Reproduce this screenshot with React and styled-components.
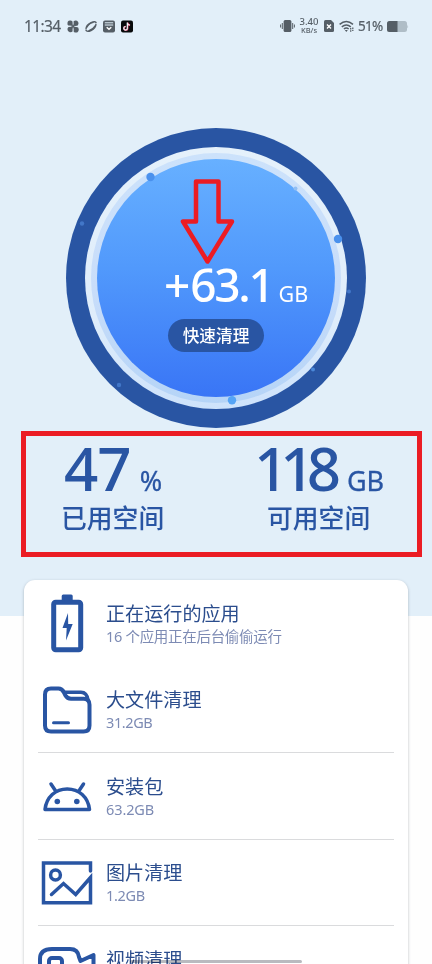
import React from 'react';
import styled, { createGlobalStyle } from 'styled-components';

const NAVY = '#2955a3';
const RED = '#eb1c24';

const GlobalStyle = createGlobalStyle`
  * { box-sizing: border-box; }
  body {
    margin: 0;
    background: #fdfefe;
    font-family: "Noto Sans", "Noto Sans CJK SC", sans-serif;
  }
`;

const Page = styled.main`
  position: relative;
  width: 432px;
  height: 964px;
  overflow: hidden;
  background: #fefefe;
`;

const Hero = styled.section`
  height: 616px;
  display: flex;
  flex-direction: column;
  align-items: center;
  background: #e2eff9;
`;

const StatusBar = styled.header`
  width: 100%;
  height: 52px;
  padding: 0 23px 0 24px;
  display: flex;
  align-items: center;
  justify-content: space-between;
  color: #555e66;
`;

const StatusGroup = styled.div`
  display: flex;
  align-items: center;
  svg { display: block; }
`;

const Clock = styled.span`
  width: 43px;
  font-size: 15.5px;
  line-height: 22px;
  padding-bottom: 1px;
  letter-spacing: -0.65px;
  -webkit-text-stroke: 0.2px currentColor;
`;

const AppIcons = styled.div`
  display: flex;
  gap: 6px;
`;

const NetSpeed = styled.div`
  width: 20px;
  margin: 0 5px 0 4px;
  display: flex;
  flex-direction: column;
  align-items: center;
  font-size: 9.5px;
  line-height: 8px;
  font-weight: 500;
  small { font-size: 7.5px; line-height: 8px; }
`;

const Percent = styled.span`
  width: 26px;
  margin: 0 3px 0 4px;
  font-size: 13.5px;
  line-height: 18px;
  letter-spacing: -0.7px;
  -webkit-text-stroke: 0.2px currentColor;
`;

const Gauge = styled.div`
  position: relative;
  flex: none;
  width: 300px;
  height: 300px;
  margin-top: 76px;
  padding: 19px;
  border-radius: 50%;
  background: ${NAVY};
`;

const Halo = styled.div`
  height: 100%;
  padding: 6px;
  border-radius: 50%;
  background: linear-gradient(#e5f1fb, #dfedfb 65%, #cde2fb);
`;

const InnerHalo = styled.div`
  height: 100%;
  padding: 6px;
  border-radius: 50%;
  background: linear-gradient(#cce2fb, #c8ddfa 55%, #b5d4f7);
`;

const Disc = styled.div`
  height: 100%;
  padding-top: 97px;
  display: flex;
  flex-direction: column;
  align-items: center;
  border-radius: 50%;
  background: linear-gradient(#67b0ff, #5199fc 46%, #3975f6);
  color: #fff;
`;

const Amount = styled.div`
  width: 100%;
  height: 52px;
  padding-left: 67px;
  display: flex;
  align-items: baseline;
  font-size: 46px;
  line-height: 56px;
  font-weight: 500;
  letter-spacing: -2.3px;
  white-space: nowrap;
`;

const Plus = styled.span`
  letter-spacing: 0;
`;

const Unit = styled.span`
  margin-left: 6px;
  font-size: 21.5px;
  font-weight: 400;
  letter-spacing: 0;
`;

const CleanButton = styled.button`
  width: 96px;
  height: 33px;
  margin-top: 11px;
  padding: 0;
  border: 0;
  border-radius: 17px;
  background: ${NAVY};
  color: #fff;
  font: 500 16.7px/33px "Noto Sans CJK SC", sans-serif;
`;

const Overlay = styled.svg`
  position: absolute;
  inset: 0;
`;

const Stats = styled.div`
  width: 401px;
  height: 126px;
  margin: 3px 0 0 11px;
  border: 5px solid ${RED};
  display: flex;
  color: ${NAVY};
`;

const Stat = styled.div`
  width: ${(p) => p.$width}px;
  padding-left: ${(p) => p.$indent}px;
`;

const StatValue = styled.div`
  height: 68px;
  margin-left: ${(p) => p.$shift}px;
  display: flex;
  align-items: baseline;
  font-size: 60px;
  line-height: 64px;
  font-weight: 500;
  letter-spacing: ${(p) => p.$tracking}px;
  white-space: nowrap;
`;

const StatUnit = styled.span`
  margin-left: ${(p) => p.$gap}px;
  font-size: 27px;
  font-weight: 400;
  letter-spacing: 0;
  -webkit-text-stroke: 0.3px currentColor;
`;

const StatLabel = styled.div`
  font: 500 25.8px/26px "Noto Sans CJK SC", sans-serif;
`;

const Card = styled.section`
  position: relative;
  width: 384px;
  height: 420px;
  margin: -36px auto 0;
  padding: 0 14px;
  border-radius: 11px;
  background: #fff;
  box-shadow: 0 1px 3px rgba(60, 70, 80, 0.35);
`;

const Row = styled.div`
  height: 86.5px;
  display: flex;
  border-bottom: 1px solid ${(p) => (p.$divided ? '#dadbdd' : 'transparent')};
`;

const RowIcon = styled.svg`
  flex: none;
  display: block;
  width: 68px;
  height: 85px;
  fill: none;
  stroke: ${NAVY};
  stroke-width: 4;
  stroke-linejoin: round;
  stroke-linecap: round;
`;

const RowText = styled.div`
  padding-top: 19.5px;
  white-space: nowrap;
`;

const RowTitle = styled.div`
  color: #2b4d8d;
  font: 400 19.1px/26px "Noto Sans CJK SC", sans-serif;
`;

const RowNote = styled.div`
  color: #7d8bb4;
  font-size: 14.5px;
  line-height: 20px;
  letter-spacing: ${(p) => p.$tracking || 0}px;
`;

const HomeBar = styled.div`
  position: absolute;
  left: 130px;
  top: 960px;
  width: 172px;
  height: 3px;
  border-radius: 2px;
  background: #b9babf;
  mix-blend-mode: multiply;
`;

const AppBadges = () => (
  <AppIcons>
    <svg width="12" height="13" viewBox="0 0 12 13" fill="currentColor">
      <path d="M.5 4.5Q0 .5 3 .5q3-.2 2.800 2.800V6L3 5.800Q.7 5.800.5 4.500z" />
      <path d="M6.400 1.500Q8 .2 10 .8q1.700.8 1.500 3Q11.300 6 9 6H6.400z" />
      <path d="M5.700 6.700H3Q.5 6.700.4 9q0 2.600 2.400 3.300 2 .2 2.900-1z" />
      <path d="M6.400 6.700 9 7q2.800-.2 2.800 2.400Q11.600 12.500 9 12.500q-2.700 0-2.600-2.600z" />
      <rect x="4" y="4.300" width="4.200" height="4.200" />
      <path d="M1.500 6.200h3.700M6.100 1.500v3.700M7 6.400h3.700M6.200 7.500v3.800" stroke="#e2eff9" strokeWidth=".6" />
    </svg>
    <svg width="12" height="13" viewBox="0 0 12 13" fill="none" stroke="currentColor">
      <path d="M1 9.500Q.8 5 6 2.600q4.500-1.800 5.300.4M11 3.700Q11 8 6 10.500q-4 1.800-5.300-.3" strokeWidth="1.400" />
      <path d="M1.800 7.500Q4 3 8.500 2.300M3.500 10.800Q8 9.500 10.300 5.500" strokeWidth="1.200" />
    </svg>
    <svg width="12" height="13" viewBox="0 0 12 13" fill="currentColor">
      <rect y=".5" width="12" height="12" rx="2" />
      <path d="M1.800 2.800h8.400M1.800 5h8.400" stroke="#e2eff9" />
      <path d="m3.700 7.300 2.300 2 2.300-2" fill="none" stroke="#fff" strokeWidth="1.500" />
    </svg>
    <svg width="12" height="13" viewBox="0 0 12 13">
      <rect y=".5" width="12" height="12" rx="2" fill="#080a0c" />
      <path d="M6.700 2.600v5.700a1.800 1.800 0 1 1-1.800-1.800M6.700 3q.4 2 2.400 2.100" fill="none" stroke="#e84b72" strokeWidth="1.500" />
      <path d="M6.300 2.600v5.700a1.800 1.800 0 1 1-1.800-1.800M6.300 3q.4 2 2.400 2.100" fill="none" stroke="#eafafa" strokeWidth="1.200" />
    </svg>
  </AppIcons>
);

const VibrateIcon = () => (
  <svg width="15" height="14" viewBox="0 0 15 14" fill="currentColor">
    <rect x="3.600" y="1" width="7.800" height="12" rx="1.500" />
    <path d="M2.300 4v6M12.700 4v6M.6 5.500v3M14.400 5.500v3" stroke="currentColor" strokeWidth="1" />
  </svg>
);

const SimIcon = () => (
  <svg width="10" height="12" viewBox="0 0 10 12">
    <path d="M1.500 0H7l3 3v7.500q0 1.500-1.500 1.500h-7Q0 12 0 10.500v-9Q0 0 1.500 0z" fill="currentColor" />
    <path d="m3 4.500 4 4M7 4.500l-4 4" stroke="#fff" strokeWidth="1.400" />
  </svg>
);

const Wifi = styled.svg`
  margin-left: 5px;
  fill: none;
  stroke: currentColor;
  stroke-width: 1.5;
`;

const WifiIcon = () => (
  <Wifi width="15" height="13" viewBox="0 0 15 13">
    <path d="M.6 4.300Q7.300-1.200 14 4.300M2.800 6.800q4.500-3.600 9 0M4.900 9q2.400-2 4.800 0" />
    <path d="M5.800 10h3l-1.500 2z" fill="currentColor" stroke="none" />
    <path d="M11.700 8v4M13.800 7.500v3.500" strokeWidth="1.300" strokeDasharray="1.500 .8" />
  </Wifi>
);

const BatteryIcon = () => (
  <svg width="22" height="11" viewBox="0 0 22 11">
    <rect width="20" height="11" rx="2.500" fill="#afbdc7" />
    <path d="M2.500 0h8v11h-8Q0 11 0 8.500v-6Q0 0 2.500 0z" fill="currentColor" />
    <path d="M20.300 3.500q1.400 2 0 4z" fill="#afbdc7" />
  </svg>
);

const icons = {
  battery: (
    <>
      <rect x="15.700" y="22.300" width="27" height="47.500" rx="2" strokeWidth="5" />
      <path d="M25.200 20v-4h8v4" strokeWidth="3" fill={NAVY} />
      <path d="m30 33-5.500 15h4.200l-.7 12.500L34.700 44h-4.500z" fill={NAVY} stroke="none" />
    </>
  ),
  folder: (
    <>
      <path d="M13 21.500h7.500q3.500 0 5.500 4l1.500 3q1.700 3.200 5.500 3.200h12.500q6 0 6 6v20.800q0 6-6 6H13q-6 0-6-6v-31q0-6 6-6z" />
      <path d="M26.500 25.300H43q6 0 7 8" strokeWidth="3.500" />
      <path d="M15.500 55.800h15" strokeWidth="3" />
    </>
  ),
  android: (
    <>
      <path d="M7 56.500h44.500C50 44 41 36 29.200 36S8.500 44 7 56.500zM18 38.500l-5-7.500M40.500 38.500l5-7.500" strokeWidth="3.500" />
      <circle cx="19.300" cy="48.500" r="2.800" fill={NAVY} stroke="none" />
      <circle cx="38.800" cy="48.500" r="2.800" fill={NAVY} stroke="none" />
    </>
  ),
  picture: (
    <>
      <path
        d="M52.500 31v-8h-47v39.700h47V37.500L37.700 54.500 25.500 43.500 13.500 54.500"
        strokeWidth="3.500"
        strokeLinejoin="miter"
      />
      <circle cx="17.500" cy="35" r="4.900" strokeWidth="3.500" />
    </>
  ),
  video: (
    <>
      <path d="M14 23h18q8 0 9 8l1.500 4L55.500 29v28L43 50v9H11q-9 0-9-9V33q0-10 12-10z" />
      <rect x="11" y="32" width="13" height="12" rx="3" />
    </>
  ),
};

const categories = [
  { icon: 'battery', title: '正在运行的应用', note: '16 个应用正在后台偷偷运行', tracking: -0.3 },
  { icon: 'folder', title: '大文件清理', note: '31.2GB', tracking: -0.4, divided: true },
  { icon: 'android', title: '安装包', note: '63.2GB', tracking: -0.1, divided: true },
  { icon: 'picture', title: '图片清理', note: '1.2GB', tracking: -0.3, divided: true },
  { icon: 'video', title: '视频清理', note: '' },
];

const GaugeDots = () => (
  <Overlay width="300" height="300" viewBox="0 0 300 300" fill="#4a91ed">
    <circle cx="84.500" cy="49" r="4.200" />
    <circle cx="272" cy="111" r="4.200" />
    <circle cx="166" cy="272.300" r="4.200" fill="#55a4f5" />
    <circle cx="16" cy="95.500" r="2.200" fill="#4277c8" />
    <circle cx="53" cy="257" r="2.200" fill="#4277c8" />
    <circle cx="283" cy="163.500" r="2" fill="#4277c8" />
    <circle cx="247" cy="241.500" r="2" fill="#4b88d8" />
    <circle cx="229.500" cy="60.500" r="2" fill="#91bff4" />
    <path
      d="M130 53.500h22.500V93.500H166L141.500 133.500 117 93.500h13z"
      fill="none"
      stroke={RED}
      strokeWidth="4.500"
      strokeLinejoin="round"
    />
  </Overlay>
);

export default function App() {
  return (
    <Page>
      <GlobalStyle />
      <Hero>
        <StatusBar>
          <StatusGroup>
            <Clock>11:34</Clock>
            <AppBadges />
          </StatusGroup>
          <StatusGroup>
            <VibrateIcon />
            <NetSpeed>3.40<small>KB/s</small></NetSpeed>
            <SimIcon />
            <WifiIcon />
            <Percent>51%</Percent>
            <BatteryIcon />
          </StatusGroup>
        </StatusBar>
        <Gauge>
          <Halo>
            <InnerHalo>
              <Disc>
                <Amount><Plus>+</Plus>63.1<Unit>GB</Unit></Amount>
                <CleanButton>快速清理</CleanButton>
              </Disc>
            </InnerHalo>
          </Halo>
          <GaugeDots />
        </Gauge>
        <Stats>
          <Stat $width={205} $indent={35}>
            <StatValue $shift={3} $tracking={-1}>47<StatUnit $gap={9}>%</StatUnit></StatValue>
            <StatLabel>已用空间</StatLabel>
          </Stat>
          <Stat $width={186} $indent={36}>
            <StatValue $shift={-13} $tracking={-8}>118<StatUnit $gap={14}>GB</StatUnit></StatValue>
            <StatLabel>可用空间</StatLabel>
          </Stat>
        </Stats>
      </Hero>
      <Card>
        {categories.map((c) => (
          <Row key={c.title} $divided={c.divided}>
            <RowIcon viewBox="0 0 68 85">{icons[c.icon]}</RowIcon>
            <RowText>
              <RowTitle>{c.title}</RowTitle>
              <RowNote $tracking={c.tracking}>{c.note}</RowNote>
            </RowText>
          </Row>
        ))}
      </Card>
      <HomeBar />
    </Page>
  );
}
